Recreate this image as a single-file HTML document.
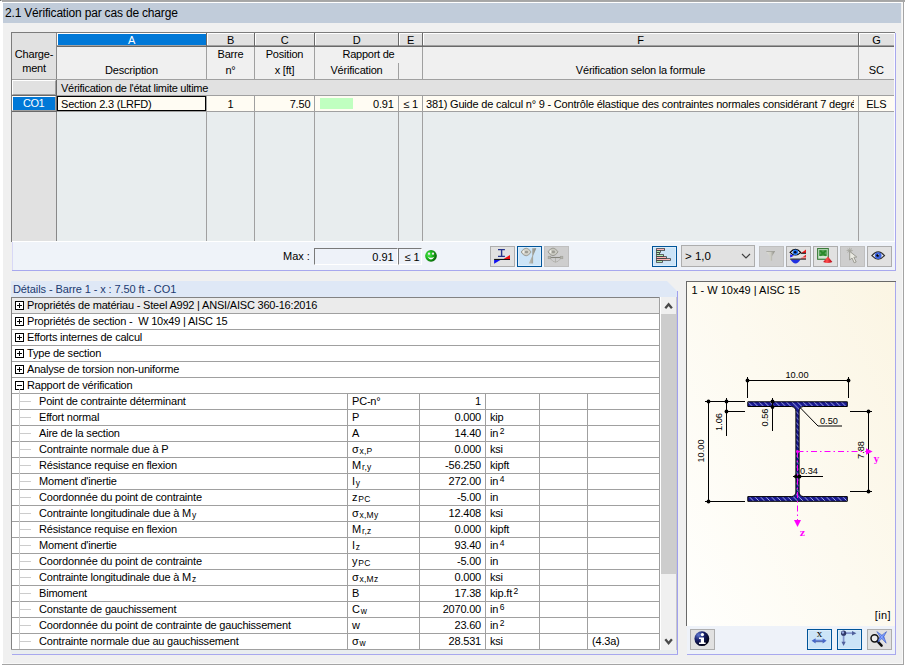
<!DOCTYPE html><html lang="fr"><head><meta charset="utf-8"><title>2.1 Vérification par cas de charge</title><style>
*{box-sizing:border-box;margin:0;padding:0}
html,body{width:906px;height:667px;overflow:hidden}
body{background:#f0f0f0;font-family:"Liberation Sans",sans-serif;font-size:11px;color:#000;position:relative}
.a{position:absolute}
.t{position:absolute;white-space:nowrap;line-height:16px;height:16px;font-size:11px;letter-spacing:-0.2px}
.c{text-align:center}
.r{text-align:right}
.ln{position:absolute;background:#a0a0a0}
.btn{position:absolute;width:25px;height:21px;background:#e1e1e1;border:1px solid #adadad}
.btn.on{background:#cce4f7;border-color:#005499;box-shadow:inset 0 0 0 1px #dcedfb}
.btn.dis{background:#cecece;border-color:#bfbfbf}
.btn.on2{background:#cce4f7;border:2px solid #005499}
.btn.on2 svg{left:-1px !important;top:-1px !important}
sub,sup{font-size:8.5px;line-height:0;letter-spacing:0.2px;margin-left:1px}
sub{vertical-align:-1px}
sup{vertical-align:3px;margin-left:1.5px}
</style></head><body>
<div class="a" style="left:0px;top:0px;width:906px;height:3px;background:#ffffff;"></div>
<div class="a" style="left:2px;top:0px;width:903px;height:1px;background:#a6a6a6;"></div>
<div class="a" style="left:2px;top:1px;width:903px;height:1px;background:#a9a9a9;"></div>
<div class="a" style="left:0px;top:0px;width:1px;height:1px;background:#707070;"></div>
<div class="a" style="left:1px;top:0px;width:1px;height:1px;background:#c0c0c0;"></div>
<div class="a" style="left:0px;top:2px;width:3px;height:665px;background:#ffffff;"></div>
<div class="a" style="left:904px;top:2px;width:2px;height:665px;background:#ffffff;"></div>
<div class="a" style="left:902px;top:2px;width:1px;height:662px;background:#f8f8f8;"></div>
<div class="a" style="left:903px;top:2px;width:1px;height:663px;background:#a4a4a4;"></div>
<div class="a" style="left:3px;top:663px;width:899px;height:1px;background:#f8f8f8;"></div>
<div class="a" style="left:2px;top:664px;width:902px;height:1px;background:#a4a4a4;"></div>
<div class="a" style="left:0px;top:665px;width:906px;height:2px;background:#ffffff;"></div>
<div class="a" style="left:3px;top:3px;width:898px;height:20px;background:#c1ccda;"></div>
<div class="t " style="left:5px;top:5px;width:300px;font-size:12px;line-height:16px;letter-spacing:-0.18px">2.1 Vérification par cas de charge</div>
<div class="a" style="left:12px;top:33px;width:882px;height:208px;background:#e8edee;"></div>
<div class="a" style="left:894px;top:33px;width:1px;height:208px;background:#fafaff;"></div>
<div class="a" style="left:12px;top:112px;width:44px;height:129px;background:#e1e1e1;"></div>
<div class="a" style="left:12px;top:33px;width:882px;height:46px;background:#f0f0f0;"></div>
<div class="a" style="left:11px;top:32px;width:884px;height:1px;background:#7c7c7c;"></div>
<div class="a" style="left:11px;top:32px;width:1px;height:210px;background:#7c7c7c;"></div>
<div class="a" style="left:895px;top:33px;width:1px;height:209px;background:#a8a8ee;"></div>
<div class="a" style="left:12px;top:241px;width:884px;height:1px;background:#ffffff;"></div>
<div class="a" style="left:57px;top:33px;width:149px;height:14px;background:#0078d7;border-top:1px solid #fff;border-left:1px solid #fff"></div>
<div class="t c" style="left:57px;top:33px;width:149px;color:#fff;line-height:14px;height:14px">A</div>
<div class="a" style="left:57px;top:45px;width:149px;height:1px;background:#a0a0a0;"></div>
<div class="a" style="left:57px;top:46px;width:149px;height:1px;background:#696969;"></div>
<div class="a" style="left:207px;top:33px;width:47px;height:14px;background:#e1e1e1;border-top:1px solid #fff;border-left:1px solid #fff"></div>
<div class="t c" style="left:207px;top:33px;width:47px;line-height:14px;height:14px">B</div>
<div class="a" style="left:207px;top:45px;width:47px;height:1px;background:#a0a0a0;"></div>
<div class="a" style="left:207px;top:46px;width:47px;height:1px;background:#696969;"></div>
<div class="a" style="left:255px;top:33px;width:59px;height:14px;background:#e1e1e1;border-top:1px solid #fff;border-left:1px solid #fff"></div>
<div class="t c" style="left:255px;top:33px;width:59px;line-height:14px;height:14px">C</div>
<div class="a" style="left:255px;top:45px;width:59px;height:1px;background:#a0a0a0;"></div>
<div class="a" style="left:255px;top:46px;width:59px;height:1px;background:#696969;"></div>
<div class="a" style="left:315px;top:33px;width:83px;height:14px;background:#e1e1e1;border-top:1px solid #fff;border-left:1px solid #fff"></div>
<div class="t c" style="left:315px;top:33px;width:83px;line-height:14px;height:14px">D</div>
<div class="a" style="left:315px;top:45px;width:83px;height:1px;background:#a0a0a0;"></div>
<div class="a" style="left:315px;top:46px;width:83px;height:1px;background:#696969;"></div>
<div class="a" style="left:399px;top:33px;width:23px;height:14px;background:#e1e1e1;border-top:1px solid #fff;border-left:1px solid #fff"></div>
<div class="t c" style="left:399px;top:33px;width:23px;line-height:14px;height:14px">E</div>
<div class="a" style="left:399px;top:45px;width:23px;height:1px;background:#a0a0a0;"></div>
<div class="a" style="left:399px;top:46px;width:23px;height:1px;background:#696969;"></div>
<div class="a" style="left:423px;top:33px;width:435px;height:14px;background:#e1e1e1;border-top:1px solid #fff;border-left:1px solid #fff"></div>
<div class="t c" style="left:423px;top:33px;width:435px;line-height:14px;height:14px">F</div>
<div class="a" style="left:423px;top:45px;width:435px;height:1px;background:#a0a0a0;"></div>
<div class="a" style="left:423px;top:46px;width:435px;height:1px;background:#696969;"></div>
<div class="a" style="left:859px;top:33px;width:35px;height:14px;background:#e1e1e1;border-top:1px solid #fff;border-left:1px solid #fff"></div>
<div class="t c" style="left:859px;top:33px;width:35px;line-height:14px;height:14px">G</div>
<div class="a" style="left:859px;top:45px;width:35px;height:1px;background:#a0a0a0;"></div>
<div class="a" style="left:859px;top:46px;width:35px;height:1px;background:#696969;"></div>
<div class="a" style="left:12px;top:33px;width:44px;height:46px;background:#e1e1e1;"></div>
<div class="a" style="left:56px;top:33px;width:1px;height:46px;background:#888;"></div>
<div class="a" style="left:206px;top:33px;width:1px;height:46px;background:#a0a0a0;"></div>
<div class="a" style="left:254px;top:33px;width:1px;height:46px;background:#a0a0a0;"></div>
<div class="a" style="left:314px;top:33px;width:1px;height:46px;background:#a0a0a0;"></div>
<div class="a" style="left:398px;top:63px;width:1px;height:16px;background:#a0a0a0;"></div>
<div class="a" style="left:422px;top:33px;width:1px;height:46px;background:#a0a0a0;"></div>
<div class="a" style="left:858px;top:33px;width:1px;height:46px;background:#a0a0a0;"></div>
<div class="a" style="left:206px;top:33px;width:1px;height:14px;background:#696969;"></div>
<div class="a" style="left:254px;top:33px;width:1px;height:14px;background:#696969;"></div>
<div class="a" style="left:314px;top:33px;width:1px;height:14px;background:#696969;"></div>
<div class="a" style="left:398px;top:33px;width:1px;height:14px;background:#696969;"></div>
<div class="a" style="left:422px;top:33px;width:1px;height:14px;background:#696969;"></div>
<div class="a" style="left:858px;top:33px;width:1px;height:14px;background:#696969;"></div>
<div class="a" style="left:12px;top:79px;width:882px;height:1px;background:#a0a0a0;"></div>
<div class="t c" style="left:12px;top:46px;width:44px;">Charge-</div>
<div class="t c" style="left:12px;top:60px;width:44px;">ment</div>
<div class="t c" style="left:57px;top:62px;width:149px;">Description</div>
<div class="t c" style="left:207px;top:46px;width:47px;">Barre</div>
<div class="t c" style="left:207px;top:62px;width:47px;">n°</div>
<div class="t c" style="left:255px;top:46px;width:59px;">Position</div>
<div class="t c" style="left:255px;top:62px;width:59px;">x [ft]</div>
<div class="t c" style="left:328.5px;top:46px;width:80px;letter-spacing:-0.25px">Rapport de</div>
<div class="t c" style="left:315px;top:62px;width:83px;">Vérification</div>
<div class="t c" style="left:423px;top:62px;width:435px;">Vérification selon la formule</div>
<div class="t c" style="left:859px;top:62px;width:34.5px;">SC</div>
<div class="a" style="left:12px;top:80px;width:882px;height:15px;background:#e1e1e1;"></div>
<div class="a" style="left:12px;top:95px;width:882px;height:1px;background:#a0a0a0;"></div>
<div class="a" style="left:12px;top:80px;width:44px;height:15px;background:#e1e1e1;border:1px solid;border-color:#fff #a0a0a0 #a0a0a0 #fff"></div>
<div class="a" style="left:56px;top:80px;width:1px;height:16px;background:#696969;"></div>
<div class="a" style="left:12px;top:95px;width:45px;height:1px;background:#696969;"></div>
<div class="t " style="left:61px;top:80px;width:300px;letter-spacing:-0.27px">Vérification de l'état limite ultime</div>
<div class="a" style="left:12px;top:96px;width:882px;height:15px;background:#fffcf3;"></div>
<div class="a" style="left:12px;top:111px;width:882px;height:1px;background:#a0a0a0;"></div>
<div class="a" style="left:12px;top:96px;width:44px;height:15px;background:#0078d7;border:1px solid;border-color:#fff #a0a0a0 #a0a0a0 #fff"></div>
<div class="a" style="left:56px;top:96px;width:1px;height:16px;background:#696969;"></div>
<div class="a" style="left:12px;top:111px;width:45px;height:1px;background:#696969;"></div>
<div class="t c" style="left:11.5px;top:95px;width:44px;color:#fff;letter-spacing:-0.5px">CO1</div>
<div class="a" style="left:206px;top:96px;width:1px;height:145px;background:#a0a0a0;"></div>
<div class="a" style="left:254px;top:96px;width:1px;height:145px;background:#a0a0a0;"></div>
<div class="a" style="left:314px;top:96px;width:1px;height:145px;background:#a0a0a0;"></div>
<div class="a" style="left:398px;top:96px;width:1px;height:145px;background:#a0a0a0;"></div>
<div class="a" style="left:422px;top:96px;width:1px;height:145px;background:#a0a0a0;"></div>
<div class="a" style="left:858px;top:96px;width:1px;height:145px;background:#a0a0a0;"></div>
<div class="a" style="left:56px;top:112px;width:1px;height:129px;background:#888;"></div>
<div class="a" style="left:57px;top:96px;width:149px;height:15px;background:transparent;border:1px solid #000"></div>
<div class="t " style="left:61px;top:96px;width:140px;">Section 2.3 (LRFD)</div>
<div class="t c" style="left:207px;top:96px;width:47px;">1</div>
<div class="t r" style="left:254.3px;top:96px;width:56px;">7.50</div>
<div class="a" style="left:320px;top:98px;width:33px;height:11px;background:#c0ffc0;"></div>
<div class="t r" style="left:313.7px;top:96px;width:80px;">0.91</div>
<div class="t c" style="left:399px;top:96px;width:23px;">≤ 1</div>
<div class="t " style="left:426px;top:96px;width:428px;overflow:hidden">381) Guide de calcul n° 9 - Contrôle élastique des contraintes normales considérant 7 degré</div>
<div class="t c" style="left:859px;top:96px;width:34.5px;">ELS</div>
<div class="a" style="left:12px;top:242px;width:884px;height:28px;background:#eff3f9;"></div>
<div class="a" style="left:12px;top:270px;width:884px;height:1px;background:#a8a8ee;"></div>
<div class="a" style="left:895px;top:241px;width:1px;height:29px;background:#a8a8ee;"></div>
<div class="a" style="left:12px;top:242px;width:1px;height:28px;background:#d8d8f6;"></div>
<div class="t " style="left:283px;top:248px;width:40px;letter-spacing:0">Max :</div>
<div class="a" style="left:314px;top:248px;width:84px;height:17px;background:#eef2f9;border:1px solid;border-color:#7a7a7a #fff #fff #7a7a7a"></div>
<div class="t r" style="left:313.7px;top:249px;width:80px;letter-spacing:0">0.91</div>
<div class="a" style="left:398px;top:248px;width:24px;height:17px;background:#eef2f9;border:1px solid;border-color:#7a7a7a #fff #fff #7a7a7a"></div>
<div class="t c" style="left:401px;top:249px;width:22px;letter-spacing:0">≤ 1</div>
<div class="btn " style="left:490px;top:246px;width:25px;height:21px"><svg width="23" height="19" viewBox="0 0 23 19" style="position:absolute;left:0;top:0"><path d="M7 2.65H13.9M7 9.35H13.9M10.6 2.65V9.35" stroke="#26348c" stroke-width="1.4" fill="none"/><path d="M3.1 12.45H19" stroke="#101010" stroke-width="1.1"/><path d="M3.1 13L9.4 13L3.1 16.8Z" fill="#1010f0"/><path d="M19 11.9L12.6 11.9L19 8Z" fill="#f01010"/></svg></div>
<div class="btn on" style="left:517px;top:246px;width:25px;height:21px"><svg width="23" height="19" viewBox="0 0 23 19" style="position:absolute;left:0;top:0"><path d="M3.0999999999999996 5Q5.6 1.1 8.1 1.2000000000000002Q10.6 1.1 13.1 5Q10.6 8.9 8.1 8.8Q5.6 8.9 3.0999999999999996 5Z" fill="#d2d2ca" stroke="#96968e" stroke-width="0.9"/><ellipse cx="8.4" cy="5" rx="1.8" ry="1.3" fill="#9c9c94"/><ellipse cx="5.5" cy="4.8" rx="0.9" ry="1.4" fill="#f0f0ea"/><defs><linearGradient id="gg" x1="0" x2="1"><stop offset="0" stop-color="#c4c4bc"/><stop offset="1" stop-color="#86867e"/></linearGradient></defs><path d="M14.2 1.2H18.3L15.1 9V16.6H10.7L14.2 9Z" fill="url(#gg)"/></svg></div>
<div class="btn dis" style="left:544px;top:246px;width:25px;height:21px"><svg width="23" height="19" viewBox="0 0 23 19" style="position:absolute;left:0;top:0"><path d="M3 4.9Q5.5 1.0000000000000004 8 1.1000000000000005Q10.5 1.0000000000000004 13 4.9Q10.5 8.8 8 8.7Q5.5 8.8 3 4.9Z" fill="#cacac2" stroke="#96968e" stroke-width="0.9"/><ellipse cx="8.3" cy="4.9" rx="1.8" ry="1.3" fill="#9c9c94"/><ellipse cx="5.4" cy="4.7" rx="0.9" ry="1.4" fill="#f0f0ea"/><path d="M3.5 10.5H17.5" stroke="#84847c" stroke-width="1.1"/><rect x="3.1" y="9.2" width="2.7" height="2.6" fill="#b4b4ac" stroke="#9a9a92" stroke-width="0.5"/><rect x="15.2" y="9.2" width="2.7" height="2.6" fill="#b4b4ac" stroke="#9a9a92" stroke-width="0.5"/><path d="M5.5 11.8Q10.5 18.5 15.5 11.8M10.5 11V15.4" stroke="#b0b0aa" stroke-width="0.9" fill="none"/></svg></div>
<div class="btn on" style="left:652px;top:246px;width:25px;height:21px"><svg width="23" height="19" viewBox="0 0 23 19" style="position:absolute;left:0;top:0"><rect x="3.1" y="1.25" width="8.9" height="2.5" fill="#3c3c3c"/><rect x="3.1" y="3.25" width="4.7" height="2.5" fill="#3c3c3c"/><rect x="3.1" y="5.25" width="3.7" height="2.5" fill="#3c3c3c"/><rect x="3.1" y="7.25" width="7.8" height="2.5" fill="#3c3c3c"/><rect x="3.1" y="9.25" width="10.7" height="2.5" fill="#3c3c3c"/><rect x="3.1" y="11.25" width="14.7" height="2.5" fill="#3c3c3c"/><rect x="3.1" y="13.25" width="6.7" height="2.5" fill="#3c3c3c"/><rect x="3.8" y="2.0" width="7.4" height="1" fill="#ffb4b4"/><rect x="3.8" y="4.0" width="3.2" height="1" fill="#b4f0b4"/><rect x="3.8" y="6.0" width="2.2" height="1" fill="#b4f0b4"/><rect x="3.8" y="8.0" width="6.3" height="1" fill="#b4f0b4"/><rect x="3.8" y="10.0" width="9.2" height="1" fill="#ffb4b4"/><rect x="3.8" y="12.0" width="13.2" height="1" fill="#ffb4b4"/><rect x="3.8" y="14.0" width="5.2" height="1" fill="#b4f0b4"/></svg></div>
<div class="a" style="left:681px;top:245px;width:74px;height:22px;background:#e1e1e1;border:1px solid #adadad"></div>
<div class="t" style="left:685px;top:248px;width:40px;font-size:11.5px;letter-spacing:0">&gt; 1,0</div>
<svg class="a" style="left:740px;top:251px" width="12" height="10"><path d="M2 3L6 7L10 3" fill="none" stroke="#404040" stroke-width="1.2"/></svg>
<div class="btn dis" style="left:759px;top:246px;width:25px;height:21px"><svg width="23" height="19" viewBox="0 0 23 19" style="position:absolute;left:0;top:0"><defs><linearGradient id="fg" x1="0" x2="1"><stop offset="0" stop-color="#deded6"/><stop offset="0.5" stop-color="#ccccc4"/><stop offset="1" stop-color="#84847c"/></linearGradient></defs><path d="M6.2 4.2H15L12.1 9.2V13.7H9.6V9.2Z" fill="url(#fg)"/><path d="M6.3 4.5H14.9" stroke="#a0a098" stroke-width="0.8"/></svg></div>
<div class="btn " style="left:786px;top:246px;width:25px;height:21px"><svg width="23" height="19" viewBox="0 0 23 19" style="position:absolute;left:0;top:0"><path d="M3.5 12.6H13.5Q8.5 20.5 3.5 12.6Z" fill="#2030e0"/><path d="M3.2 7.3V10.4L6.8 8.8Z" fill="#1010f0"/><path d="M14.3 5.9H19V2.4Z" fill="#e81818"/><path d="M13.6 11.6H19V7.8Z" fill="#e81818"/><path d="M15 10.3H19" stroke="#f8e0e0" stroke-width="0.7"/><path d="M13.7 6.3H19" stroke="#101010" stroke-width="1"/><path d="M3.2 12.1H19" stroke="#101010" stroke-width="1"/><path d="M3.1 5.3Q8.4 -0.6 13.7 5.3Q8.4 10.8 3.1 5.3Z" fill="#fff" stroke="#000" stroke-width="1.1"/><circle cx="8.4" cy="5.2" r="2.8" fill="#2878f0"/><circle cx="8.2" cy="5.2" r="1.3" fill="#000820"/></svg></div>
<div class="btn " style="left:813px;top:246px;width:25px;height:21px"><svg width="23" height="19" viewBox="0 0 23 19" style="position:absolute;left:0;top:0"><defs><linearGradient id="rg" x1="0" x2="1"><stop offset="0" stop-color="#c00010"/><stop offset="0.4" stop-color="#ff5050"/><stop offset="1" stop-color="#b00010"/></linearGradient></defs><rect x="3.6" y="1.5" width="10.7" height="10.8" fill="#5aa45a" stroke="#3a7a3a" stroke-width="1"/><rect x="4.6" y="2.5" width="8.7" height="8.8" fill="none" stroke="#c4dcc4" stroke-width="0.8"/><rect x="5" y="9" width="8" height="2" fill="#d4e6d4"/><path d="M6.2 3.8L11.8 8.6M11.8 3.8L6.2 8.6" stroke="#2a8a2a" stroke-width="1.8"/><path d="M13.9 9.5L18.4 15Q13.8 17 9.2 15Z" fill="url(#rg)"/></svg></div>
<div class="btn dis" style="left:840px;top:246px;width:25px;height:21px"><svg width="23" height="19" viewBox="0 0 23 19" style="position:absolute;left:0;top:0"><path d="M6.5 2L11 5.5M11 1.5L6.5 5.5M8.7 0.8V6M5.6 3.6H11.8" stroke="#a4a49c" stroke-width="0.8"/><path d="M8.7 4.4L8.7 13L11 11L13.2 15.8L15.2 15L12.9 10.3L15.8 10Z" fill="#eaeae2" stroke="#9c9c94" stroke-width="1"/></svg></div>
<div class="btn " style="left:867px;top:246px;width:25px;height:21px"><svg width="23" height="19" viewBox="0 0 23 19" style="position:absolute;left:0;top:0"><path d="M3.9 8.7Q10.2 1.2 16.5 8.7Q10.2 15.6 3.9 8.7Z" fill="#f0f0f4" stroke="#303030" stroke-width="1.2"/><circle cx="10.2" cy="8.6" r="3.4" fill="#3c64e0"/><circle cx="9.7" cy="8.5" r="1.35" fill="#000"/><circle cx="10.4" cy="7.7" r="0.5" fill="#dfe8ff"/></svg></div>
<svg class="a" style="left:424px;top:249px" width="14" height="14"><defs><radialGradient id="sg" cx="0.32" cy="0.4" r="0.75"><stop offset="0" stop-color="#52f052"/><stop offset="0.45" stop-color="#1cb41c"/><stop offset="1" stop-color="#005400"/></radialGradient></defs><circle cx="7" cy="6.9" r="5.8" fill="url(#sg)"/><circle cx="5" cy="4.7" r="1.15" fill="#f0e8f4"/><circle cx="9" cy="4.7" r="1.15" fill="#f0e8f4"/><path d="M3.5 7.8Q7 9.6 10.5 7.8Q7 13.2 3.5 7.8Z" fill="#ffffff"/></svg>
<div class="a" style="left:11px;top:281px;width:667px;height:16px;background:#dfe8f6;clip-path:polygon(0 0,656px 0,667px 11px,667px 16px,0 16px)"></div>
<div class="a" style="left:677px;top:291px;width:1px;height:364px;background:#a0a0ee;"></div>
<div class="t " style="left:13px;top:281px;width:400px;color:#1c3a70;letter-spacing:-0.1px">Détails - Barre 1 - x : 7.50 ft - CO1</div>
<div class="a" style="left:12px;top:298px;width:648px;height:352px;background:#ffffff;"></div>
<div class="a" style="left:12px;top:298px;width:648px;height:15px;background:#ebebeb;"></div>
<div class="a" style="left:11px;top:297px;width:649px;height:1px;background:#828282;"></div>
<div class="a" style="left:11px;top:297px;width:1px;height:353px;background:#828282;"></div>
<div class="a" style="left:659px;top:297px;width:1px;height:353px;background:#a0a0a0;"></div>
<div class="a" style="left:11px;top:649px;width:649px;height:1px;background:#a0a0a0;"></div>
<div class="a" style="left:11px;top:650px;width:666px;height:4px;background:#e9edef;"></div>
<div class="a" style="left:660px;top:297px;width:17px;height:353px;background:#f0f0f0;"></div>
<div class="a" style="left:660px;top:297px;width:1px;height:353px;background:#ffffff;"></div>
<div class="a" style="left:676px;top:297px;width:1px;height:353px;background:#c6c6ca;"></div>
<div class="a" style="left:12px;top:654px;width:666px;height:1px;background:#a8a8ee;"></div>
<div class="a" style="left:12px;top:313px;width:648px;height:1px;background:#a0a0a0;"></div>
<div class="a" style="left:12px;top:329px;width:648px;height:1px;background:#a0a0a0;"></div>
<div class="a" style="left:12px;top:345px;width:648px;height:1px;background:#a0a0a0;"></div>
<div class="a" style="left:12px;top:361px;width:648px;height:1px;background:#a0a0a0;"></div>
<div class="a" style="left:12px;top:377px;width:648px;height:1px;background:#a0a0a0;"></div>
<div class="a" style="left:12px;top:393px;width:648px;height:1px;background:#a0a0a0;"></div>
<div class="a" style="left:12px;top:409px;width:648px;height:1px;background:#a0a0a0;"></div>
<div class="a" style="left:12px;top:425px;width:648px;height:1px;background:#a0a0a0;"></div>
<div class="a" style="left:12px;top:441px;width:648px;height:1px;background:#a0a0a0;"></div>
<div class="a" style="left:12px;top:457px;width:648px;height:1px;background:#a0a0a0;"></div>
<div class="a" style="left:12px;top:473px;width:648px;height:1px;background:#a0a0a0;"></div>
<div class="a" style="left:12px;top:489px;width:648px;height:1px;background:#a0a0a0;"></div>
<div class="a" style="left:12px;top:505px;width:648px;height:1px;background:#a0a0a0;"></div>
<div class="a" style="left:12px;top:521px;width:648px;height:1px;background:#a0a0a0;"></div>
<div class="a" style="left:12px;top:537px;width:648px;height:1px;background:#a0a0a0;"></div>
<div class="a" style="left:12px;top:553px;width:648px;height:1px;background:#a0a0a0;"></div>
<div class="a" style="left:12px;top:569px;width:648px;height:1px;background:#a0a0a0;"></div>
<div class="a" style="left:12px;top:585px;width:648px;height:1px;background:#a0a0a0;"></div>
<div class="a" style="left:12px;top:601px;width:648px;height:1px;background:#a0a0a0;"></div>
<div class="a" style="left:12px;top:617px;width:648px;height:1px;background:#a0a0a0;"></div>
<div class="a" style="left:12px;top:633px;width:648px;height:1px;background:#a0a0a0;"></div>
<div class="a" style="left:15px;top:301px;width:9px;height:9px;border:1px solid #000;background:#fff"></div>
<div class="a" style="left:17px;top:305px;width:5px;height:1px;background:#000;"></div>
<div class="a" style="left:19px;top:303px;width:1px;height:5px;background:#000;"></div>
<div class="t " style="left:27px;top:297px;width:400px;">Propriétés de matériau - Steel A992 | ANSI/AISC 360-16:2016</div>
<div class="a" style="left:15px;top:317px;width:9px;height:9px;border:1px solid #000;background:#fff"></div>
<div class="a" style="left:17px;top:321px;width:5px;height:1px;background:#000;"></div>
<div class="a" style="left:19px;top:319px;width:1px;height:5px;background:#000;"></div>
<div class="t " style="left:27px;top:313px;width:400px;">Propriétés de section - &nbsp;W 10x49 | AISC 15</div>
<div class="a" style="left:15px;top:333px;width:9px;height:9px;border:1px solid #000;background:#fff"></div>
<div class="a" style="left:17px;top:337px;width:5px;height:1px;background:#000;"></div>
<div class="a" style="left:19px;top:335px;width:1px;height:5px;background:#000;"></div>
<div class="t " style="left:27px;top:329px;width:400px;">Efforts internes de calcul</div>
<div class="a" style="left:15px;top:349px;width:9px;height:9px;border:1px solid #000;background:#fff"></div>
<div class="a" style="left:17px;top:353px;width:5px;height:1px;background:#000;"></div>
<div class="a" style="left:19px;top:351px;width:1px;height:5px;background:#000;"></div>
<div class="t " style="left:27px;top:345px;width:400px;">Type de section</div>
<div class="a" style="left:15px;top:365px;width:9px;height:9px;border:1px solid #000;background:#fff"></div>
<div class="a" style="left:17px;top:369px;width:5px;height:1px;background:#000;"></div>
<div class="a" style="left:19px;top:367px;width:1px;height:5px;background:#000;"></div>
<div class="t " style="left:27px;top:361px;width:400px;">Analyse de torsion non-uniforme</div>
<div class="a" style="left:15px;top:381px;width:9px;height:9px;border:1px solid #000;background:#fff"></div>
<div class="a" style="left:17px;top:385px;width:5px;height:1px;background:#000;"></div>
<div class="t " style="left:27px;top:377px;width:400px;">Rapport de vérification</div>
<div class="a" style="left:19px;top:389px;width:1px;height:260px;background:#cccccc;"></div>
<div class="a" style="left:347px;top:394px;width:1px;height:256px;background:#a0a0a0;"></div>
<div class="a" style="left:419px;top:394px;width:1px;height:256px;background:#a0a0a0;"></div>
<div class="a" style="left:485px;top:394px;width:1px;height:256px;background:#a0a0a0;"></div>
<div class="a" style="left:539px;top:394px;width:1px;height:256px;background:#a0a0a0;"></div>
<div class="a" style="left:587px;top:394px;width:1px;height:256px;background:#a0a0a0;"></div>
<div class="a" style="left:19px;top:401px;width:12px;height:1px;background:#cccccc;"></div>
<div class="t " style="left:39px;top:393px;width:300px;">Point de contrainte déterminant</div>
<div class="t " style="left:352px;top:393px;width:66px;">PC-n°</div>
<div class="t r" style="left:420px;top:393px;width:61px;">1</div>
<div class="t " style="left:490px;top:393px;width:48px;"></div>
<div class="a" style="left:19px;top:417px;width:12px;height:1px;background:#cccccc;"></div>
<div class="t " style="left:39px;top:409px;width:300px;">Effort normal</div>
<div class="t " style="left:352px;top:409px;width:66px;">P</div>
<div class="t r" style="left:420px;top:409px;width:61px;">0.000</div>
<div class="t " style="left:490px;top:409px;width:48px;">kip</div>
<div class="a" style="left:19px;top:433px;width:12px;height:1px;background:#cccccc;"></div>
<div class="t " style="left:39px;top:425px;width:300px;">Aire de la section</div>
<div class="t " style="left:352px;top:425px;width:66px;">A</div>
<div class="t r" style="left:420px;top:425px;width:61px;">14.40</div>
<div class="t " style="left:490px;top:425px;width:48px;">in<sup>2</sup></div>
<div class="a" style="left:19px;top:449px;width:12px;height:1px;background:#cccccc;"></div>
<div class="t " style="left:39px;top:441px;width:300px;">Contrainte normale due à P</div>
<div class="t " style="left:352px;top:441px;width:66px;">σ<sub>x,P</sub></div>
<div class="t r" style="left:420px;top:441px;width:61px;">0.000</div>
<div class="t " style="left:490px;top:441px;width:48px;">ksi</div>
<div class="a" style="left:19px;top:465px;width:12px;height:1px;background:#cccccc;"></div>
<div class="t " style="left:39px;top:457px;width:300px;">Résistance requise en flexion</div>
<div class="t " style="left:352px;top:457px;width:66px;">M<sub>r,y</sub></div>
<div class="t r" style="left:420px;top:457px;width:61px;">-56.250</div>
<div class="t " style="left:490px;top:457px;width:48px;">kipft</div>
<div class="a" style="left:19px;top:481px;width:12px;height:1px;background:#cccccc;"></div>
<div class="t " style="left:39px;top:473px;width:300px;">Moment d'inertie</div>
<div class="t " style="left:352px;top:473px;width:66px;">I<sub>y</sub></div>
<div class="t r" style="left:420px;top:473px;width:61px;">272.00</div>
<div class="t " style="left:490px;top:473px;width:48px;">in<sup>4</sup></div>
<div class="a" style="left:19px;top:497px;width:12px;height:1px;background:#cccccc;"></div>
<div class="t " style="left:39px;top:489px;width:300px;">Coordonnée du point de contrainte</div>
<div class="t " style="left:352px;top:489px;width:66px;">z<sub>PC</sub></div>
<div class="t r" style="left:420px;top:489px;width:61px;">-5.00</div>
<div class="t " style="left:490px;top:489px;width:48px;">in</div>
<div class="a" style="left:19px;top:513px;width:12px;height:1px;background:#cccccc;"></div>
<div class="t " style="left:39px;top:505px;width:300px;">Contrainte longitudinale due à M<sub>y</sub></div>
<div class="t " style="left:352px;top:505px;width:66px;">σ<sub>x,My</sub></div>
<div class="t r" style="left:420px;top:505px;width:61px;">12.408</div>
<div class="t " style="left:490px;top:505px;width:48px;">ksi</div>
<div class="a" style="left:19px;top:529px;width:12px;height:1px;background:#cccccc;"></div>
<div class="t " style="left:39px;top:521px;width:300px;">Résistance requise en flexion</div>
<div class="t " style="left:352px;top:521px;width:66px;">M<sub>r,z</sub></div>
<div class="t r" style="left:420px;top:521px;width:61px;">0.000</div>
<div class="t " style="left:490px;top:521px;width:48px;">kipft</div>
<div class="a" style="left:19px;top:545px;width:12px;height:1px;background:#cccccc;"></div>
<div class="t " style="left:39px;top:537px;width:300px;">Moment d'inertie</div>
<div class="t " style="left:352px;top:537px;width:66px;">I<sub>z</sub></div>
<div class="t r" style="left:420px;top:537px;width:61px;">93.40</div>
<div class="t " style="left:490px;top:537px;width:48px;">in<sup>4</sup></div>
<div class="a" style="left:19px;top:561px;width:12px;height:1px;background:#cccccc;"></div>
<div class="t " style="left:39px;top:553px;width:300px;">Coordonnée du point de contrainte</div>
<div class="t " style="left:352px;top:553px;width:66px;">y<sub>PC</sub></div>
<div class="t r" style="left:420px;top:553px;width:61px;">-5.00</div>
<div class="t " style="left:490px;top:553px;width:48px;">in</div>
<div class="a" style="left:19px;top:577px;width:12px;height:1px;background:#cccccc;"></div>
<div class="t " style="left:39px;top:569px;width:300px;">Contrainte longitudinale due à M<sub>z</sub></div>
<div class="t " style="left:352px;top:569px;width:66px;">σ<sub>x,Mz</sub></div>
<div class="t r" style="left:420px;top:569px;width:61px;">0.000</div>
<div class="t " style="left:490px;top:569px;width:48px;">ksi</div>
<div class="a" style="left:19px;top:593px;width:12px;height:1px;background:#cccccc;"></div>
<div class="t " style="left:39px;top:585px;width:300px;">Bimoment</div>
<div class="t " style="left:352px;top:585px;width:66px;">B</div>
<div class="t r" style="left:420px;top:585px;width:61px;">17.38</div>
<div class="t " style="left:490px;top:585px;width:48px;">kip.ft<sup>2</sup></div>
<div class="a" style="left:19px;top:609px;width:12px;height:1px;background:#cccccc;"></div>
<div class="t " style="left:39px;top:601px;width:300px;">Constante de gauchissement</div>
<div class="t " style="left:352px;top:601px;width:66px;">C<sub>w</sub></div>
<div class="t r" style="left:420px;top:601px;width:61px;">2070.00</div>
<div class="t " style="left:490px;top:601px;width:48px;">in<sup>6</sup></div>
<div class="a" style="left:19px;top:625px;width:12px;height:1px;background:#cccccc;"></div>
<div class="t " style="left:39px;top:617px;width:300px;">Coordonnée du point de contrainte de gauchissement</div>
<div class="t " style="left:352px;top:617px;width:66px;">w</div>
<div class="t r" style="left:420px;top:617px;width:61px;">23.60</div>
<div class="t " style="left:490px;top:617px;width:48px;">in<sup>2</sup></div>
<div class="a" style="left:19px;top:641px;width:12px;height:1px;background:#cccccc;"></div>
<div class="t " style="left:39px;top:633px;width:300px;">Contrainte normale due au gauchissement</div>
<div class="t " style="left:352px;top:633px;width:66px;">σ<sub>w</sub></div>
<div class="t r" style="left:420px;top:633px;width:61px;">28.531</div>
<div class="t " style="left:490px;top:633px;width:48px;">ksi</div>
<div class="t " style="left:592px;top:633px;width:60px;">(4.3a)</div>
<div class="a" style="left:661px;top:314px;width:15px;height:260px;background:#cdcdcd;"></div>
<svg class="a" style="left:660px;top:297px" width="17" height="353"><path d="M5.3 11.3 L8.6 7.3 L11.9 11.3" fill="none" stroke="#4a4a4a" stroke-width="2.3"/><path d="M5.3 342.3 L8.6 346.3 L11.9 342.3" fill="none" stroke="#4a4a4a" stroke-width="2.3"/></svg>
<div class="a" style="left:686px;top:281px;width:210px;height:345px;background:#fdfaf0;background:linear-gradient(65deg,#fffffd 0%,#fdfaf0 50%,#fbf5e3 100%)"></div>
<div class="a" style="left:686px;top:281px;width:210px;height:1px;background:#696969;"></div>
<div class="a" style="left:686px;top:281px;width:1px;height:345px;background:#696969;"></div>
<div class="a" style="left:895px;top:282px;width:1px;height:373px;background:#a8a8ee;"></div>
<div class="a" style="left:687px;top:626px;width:208px;height:28px;background:#eef2f9;"></div>
<div class="a" style="left:687px;top:654px;width:209px;height:1px;background:#a8a8ee;"></div>
<div class="t " style="left:691.4px;top:282px;width:200px;letter-spacing:0">1 - W 10x49 | AISC 15</div>
<div class="t r" style="left:860px;top:607px;width:31px;letter-spacing:0.4px">[in]</div>
<svg class="a" style="left:687px;top:282px" width="208" height="344" viewBox="687 282 208 344" font-family="Liberation Sans, sans-serif" font-size="9.2"><defs><pattern id="hatch" width="5.5" height="5.5" patternUnits="userSpaceOnUse" patternTransform="translate(747 401)"><rect width="5.5" height="5.5" fill="#1a1a92"/><path d="M-1 -1L6.5 6.5M-1 4.5L1 6.5M4.5 -1L6.5 1" stroke="#b4c0f2" stroke-width="0.9"/></pattern></defs><path d="M747.8 401.8H847.3V406.5H803.6A4.5 4.5 0 0 0 799.1 411.0V492.1A4.5 4.5 0 0 0 803.6 496.6H847.3V501.3H747.8V496.6H791.4A4.5 4.5 0 0 0 795.9 492.1V411.0A4.5 4.5 0 0 0 791.4 406.5H747.8Z" fill="url(#hatch)" stroke="#000" stroke-width="1"/><path d="M747 380.5L848 380.5" stroke="#000" stroke-width="1" fill="none" shape-rendering="crispEdges"/><path d="M747.5 377L747.5 398" stroke="#000" stroke-width="1" fill="none" shape-rendering="crispEdges"/><path d="M848.5 377L848.5 398" stroke="#000" stroke-width="1" fill="none" shape-rendering="crispEdges"/><circle cx="747.5" cy="380.5" r="1.9" fill="#000"/><circle cx="848.5" cy="380.5" r="1.9" fill="#000"/><text x="797" y="378" text-anchor="middle">10.00</text><path d="M708.5 401L708.5 502" stroke="#000" stroke-width="1" fill="none" shape-rendering="crispEdges"/><path d="M705 401.5L745 401.5" stroke="#000" stroke-width="1" fill="none" shape-rendering="crispEdges"/><path d="M705 501.5L745 501.5" stroke="#000" stroke-width="1" fill="none" shape-rendering="crispEdges"/><circle cx="708.5" cy="401.5" r="1.9" fill="#000"/><circle cx="708.5" cy="501.5" r="1.9" fill="#000"/><text transform="translate(703.5 451) rotate(-90)" text-anchor="middle">10.00</text><path d="M726.5 398L726.5 436" stroke="#000" stroke-width="1" fill="none" shape-rendering="crispEdges"/><path d="M726 411.5L745 411.5" stroke="#000" stroke-width="1" fill="none" shape-rendering="crispEdges"/><circle cx="726.5" cy="401.5" r="1.9" fill="#000"/><circle cx="726.5" cy="411.5" r="1.9" fill="#000"/><text transform="translate(722 422) rotate(-90)" text-anchor="middle">1.06</text><path d="M772.5 398L772.5 431" stroke="#000" stroke-width="1" fill="none" shape-rendering="crispEdges"/><circle cx="772.5" cy="401.5" r="1.9" fill="#000"/><circle cx="772.5" cy="407" r="1.9" fill="#000"/><text transform="translate(768 417.5) rotate(-90)" text-anchor="middle">0.56</text><path d="M800.5 408L818 426H842" stroke="#000" stroke-width="1" fill="none"/><text x="820" y="424.3">0.50</text><path d="M868.5 411L868.5 492" stroke="#000" stroke-width="1" fill="none" shape-rendering="crispEdges"/><path d="M850 411.5L872 411.5" stroke="#000" stroke-width="1" fill="none" shape-rendering="crispEdges"/><path d="M850 491.5L872 491.5" stroke="#000" stroke-width="1" fill="none" shape-rendering="crispEdges"/><circle cx="868.5" cy="411.5" r="1.9" fill="#000"/><circle cx="868.5" cy="491.5" r="1.9" fill="#000"/><text transform="translate(864.3 450) rotate(-90)" text-anchor="middle">7.88</text><path d="M793 476.5L823 476.5" stroke="#000" stroke-width="1" fill="none" shape-rendering="crispEdges"/><circle cx="796" cy="476.5" r="1.9" fill="#000"/><circle cx="799.5" cy="476.5" r="1.9" fill="#000"/><text x="800" y="474.3">0.34</text><path d="M797.5 451.5H866" stroke="#ff00ff" stroke-width="1" stroke-dasharray="6 3 1.5 3" fill="none"/><path d="M866 448.2L872.6 451.5L866 454.8Z" fill="#ff00ff"/><path d="M797.5 451.5V520" stroke="#ff00ff" stroke-width="1" stroke-dasharray="6 3 1.5 3" fill="none"/><path d="M794 520L797.5 527L801 520Z" fill="#ff00ff"/><circle cx="797.5" cy="451.5" r="1.5" fill="#ff00ff"/><text x="873.7" y="461.6" font-family="DejaVu Serif, serif" font-weight="bold" font-size="9" fill="#ff00ff">y</text><text x="799.7" y="535.6" font-family="DejaVu Serif, serif" font-weight="bold" font-size="9" fill="#ff00ff">z</text></svg>
<div class="btn " style="left:690px;top:629px;width:25px;height:21px"><svg width="23" height="19" viewBox="0 0 23 19" style="position:absolute;left:0;top:0"><defs><radialGradient id="ig" cx="0.28" cy="0.25" r="0.8"><stop offset="0" stop-color="#6078d0"/><stop offset="0.45" stop-color="#18206a"/><stop offset="1" stop-color="#000010"/></radialGradient></defs><circle cx="10.85" cy="8.7" r="7.4" fill="url(#ig)"/><circle cx="11.4" cy="4.55" r="1.65" fill="#fff"/><path d="M8 7.5H13V12.6H14.6V14H8V12.6H9.8V9H8Z" fill="#fff"/></svg></div>
<div class="btn on" style="left:807px;top:629px;width:25px;height:21px"><svg width="23" height="19" viewBox="0 0 23 19" style="position:absolute;left:0;top:0"><text x="11.4" y="6.9" text-anchor="middle" font-family="Liberation Serif, serif" font-size="11" fill="#000">x</text><path d="M6.5 10.6H16.5" stroke="#6484d8" stroke-width="1.8"/><path d="M6.5 11.7H16.5" stroke="#2c3c84" stroke-width="0.7"/><path d="M3.6 10.8L7.6 8.2V13.4Z" fill="#4868c8"/><path d="M18.6 10.8L14.6 8.2V13.4Z" fill="#4868c8"/></svg></div>
<div class="btn on" style="left:837px;top:629px;width:25px;height:21px"><svg width="23" height="19" viewBox="0 0 23 19" style="position:absolute;left:0;top:0"><path d="M5.6 3.2H15M5.6 3.2V13" stroke="#8494cc" stroke-width="1.7" fill="none"/><path d="M18.4 3.2L14 1V5.4Z" fill="#50609c"/><path d="M5.6 16L3.5 11.8H7.7Z" fill="#50609c"/><circle cx="5.6" cy="3.2" r="2.6" fill="#303868"/><circle cx="4.9" cy="2.5" r="1.2" fill="#98a8e0"/></svg></div>
<div class="btn " style="left:867px;top:629px;width:25px;height:21px"><svg width="23" height="19" viewBox="0 0 23 19" style="position:absolute;left:0;top:0"><circle cx="6.6" cy="8.3" r="3.6" fill="#ececec" stroke="#101010" stroke-width="1.5"/><path d="M9.6 11.3L13.6 15.6" stroke="#101010" stroke-width="2.5" stroke-linecap="round"/><path d="M8.8 1.6L13.9 5.2L18.6 1.6L15.9 6.6L18.2 13.2L13.8 8.6L9.6 12.4L11.9 6.6Z" fill="#5a80f0" stroke="#3050b8" stroke-width="0.5"/><path d="M11 3.5L16.6 10.5M16.8 3.4L11.4 10" stroke="#a0b8ff" stroke-width="0.7"/></svg></div>
</body></html>
